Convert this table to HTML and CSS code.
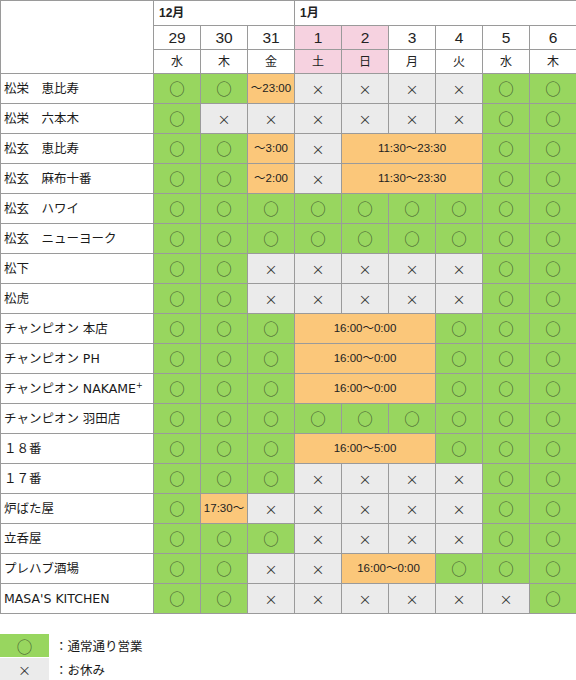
FILE: index.html
```html
<!DOCTYPE html>
<html lang="ja">
<head>
<meta charset="utf-8">
<title>年末年始営業日</title>
<link rel="stylesheet" href="styles.css">
</head>
<body>
<table class="sched">
  <colgroup>
    <col class="c-name">
    <col class="c-day"><col class="c-day"><col class="c-day"><col class="c-day"><col class="c-day"><col class="c-day"><col class="c-day"><col class="c-day"><col class="c-day">
  </colgroup>
  <thead>
    <tr class="h-month">
      <th rowspan="3" class="corner"></th>
      <th colspan="3" class="month">12月</th>
      <th colspan="6" class="month">1月</th>
    </tr>
    <tr class="h-date">
      <th>29</th><th>30</th><th>31</th><th class="hol">1</th><th class="hol">2</th><th>3</th><th>4</th><th>5</th><th>6</th>
    </tr>
    <tr class="h-dow">
      <th>水</th><th>木</th><th>金</th><th class="hol">土</th><th class="hol">日</th><th>月</th><th>火</th><th>水</th><th>木</th>
    </tr>
  </thead>
  <tbody>
    <tr><th class="name">松栄　恵比寿</th><td class="o">○</td><td class="o">○</td><td class="t">～23:00</td><td class="x">×</td><td class="x">×</td><td class="x">×</td><td class="x">×</td><td class="o">○</td><td class="o">○</td></tr>
    <tr><th class="name">松栄　六本木</th><td class="o">○</td><td class="x">×</td><td class="x">×</td><td class="x">×</td><td class="x">×</td><td class="x">×</td><td class="x">×</td><td class="o">○</td><td class="o">○</td></tr>
    <tr><th class="name">松玄　恵比寿</th><td class="o">○</td><td class="o">○</td><td class="t">～3:00</td><td class="x">×</td><td class="t" colspan="3">11:30～23:30</td><td class="o">○</td><td class="o">○</td></tr>
    <tr><th class="name">松玄　麻布十番</th><td class="o">○</td><td class="o">○</td><td class="t">～2:00</td><td class="x">×</td><td class="t" colspan="3">11:30～23:30</td><td class="o">○</td><td class="o">○</td></tr>
    <tr><th class="name">松玄　ハワイ</th><td class="o">○</td><td class="o">○</td><td class="o">○</td><td class="o">○</td><td class="o">○</td><td class="o">○</td><td class="o">○</td><td class="o">○</td><td class="o">○</td></tr>
    <tr><th class="name">松玄　ニューヨーク</th><td class="o">○</td><td class="o">○</td><td class="o">○</td><td class="o">○</td><td class="o">○</td><td class="o">○</td><td class="o">○</td><td class="o">○</td><td class="o">○</td></tr>
    <tr><th class="name">松下</th><td class="o">○</td><td class="o">○</td><td class="x">×</td><td class="x">×</td><td class="x">×</td><td class="x">×</td><td class="x">×</td><td class="o">○</td><td class="o">○</td></tr>
    <tr><th class="name">松虎</th><td class="o">○</td><td class="o">○</td><td class="x">×</td><td class="x">×</td><td class="x">×</td><td class="x">×</td><td class="x">×</td><td class="o">○</td><td class="o">○</td></tr>
    <tr><th class="name">チャンピオン 本店</th><td class="o">○</td><td class="o">○</td><td class="o">○</td><td class="t" colspan="3">16:00～0:00</td><td class="o">○</td><td class="o">○</td><td class="o">○</td></tr>
    <tr><th class="name">チャンピオン PH</th><td class="o">○</td><td class="o">○</td><td class="o">○</td><td class="t" colspan="3">16:00～0:00</td><td class="o">○</td><td class="o">○</td><td class="o">○</td></tr>
    <tr><th class="name">チャンピオン NAKAME<sup>+</sup></th><td class="o">○</td><td class="o">○</td><td class="o">○</td><td class="t" colspan="3">16:00～0:00</td><td class="o">○</td><td class="o">○</td><td class="o">○</td></tr>
    <tr><th class="name">チャンピオン 羽田店</th><td class="o">○</td><td class="o">○</td><td class="o">○</td><td class="o">○</td><td class="o">○</td><td class="o">○</td><td class="o">○</td><td class="o">○</td><td class="o">○</td></tr>
    <tr><th class="name">１８番</th><td class="o">○</td><td class="o">○</td><td class="o">○</td><td class="t" colspan="3">16:00～5:00</td><td class="o">○</td><td class="o">○</td><td class="o">○</td></tr>
    <tr><th class="name">１７番</th><td class="o">○</td><td class="o">○</td><td class="o">○</td><td class="x">×</td><td class="x">×</td><td class="x">×</td><td class="x">×</td><td class="o">○</td><td class="o">○</td></tr>
    <tr><th class="name">炉ばた屋</th><td class="o">○</td><td class="t">17:30～</td><td class="x">×</td><td class="x">×</td><td class="x">×</td><td class="x">×</td><td class="x">×</td><td class="o">○</td><td class="o">○</td></tr>
    <tr><th class="name">立呑屋</th><td class="o">○</td><td class="o">○</td><td class="o">○</td><td class="x">×</td><td class="x">×</td><td class="x">×</td><td class="x">×</td><td class="o">○</td><td class="o">○</td></tr>
    <tr><th class="name">プレハブ酒場</th><td class="o">○</td><td class="o">○</td><td class="x">×</td><td class="x">×</td><td class="t" colspan="2">16:00～0:00</td><td class="o">○</td><td class="o">○</td><td class="o">○</td></tr>
    <tr><th class="name">MASA'S KITCHEN</th><td class="o">○</td><td class="o">○</td><td class="x">×</td><td class="x">×</td><td class="x">×</td><td class="x">×</td><td class="x">×</td><td class="x">×</td><td class="o">○</td></tr>
  </tbody>
</table>

<div class="legend">
  <div class="legend-row"><span class="swatch o">○</span><span class="legend-text">：通常通り営業</span></div>
  <div class="legend-row"><span class="swatch x">×</span><span class="legend-text">：お休み</span></div>
</div>
</body>
</html>
```

FILE: styles.css
```css
html, body {
  margin: 0;
  padding: 0;
  background: #fff;
}

body {
  font-family: "Liberation Sans", "Noto Sans CJK JP", sans-serif;
  color: #222;
  font-size: 12px;
}

.sched {
  border-collapse: collapse;
  table-layout: fixed;
  width: 576px;
}

.c-name { width: 153px; }
.c-day { width: 47px; }

.sched th,
.sched td {
  border: 1px solid #9a9a9a;
  padding: 0;
  text-align: center;
  vertical-align: middle;
  font-weight: normal;
  line-height: 1;
  white-space: nowrap;
  overflow: hidden;
}

.h-month th { height: 24px; }
.h-date th { height: 22px; font-size: 15.5px; padding-top: 1px; }
.h-dow th { height: 23px; font-size: 12px; }

.sched .month {
  text-align: left;
  padding-left: 5px;
  font-size: 12px;
  font-weight: bold;
}

.sched .hol { background: #f6d2e0; }

.sched tbody th,
.sched tbody td { height: 29px; }

.sched tbody .name {
  height: 27px;
  text-align: left;
  padding-left: 3px;
  padding-top: 2px;
  font-family: "DejaVu Sans", "Noto Sans CJK JP", sans-serif;
  font-size: 12.5px;
  color: #1a1a1a;
  background: #fff;
}

.name sup {
  font-size: 8px;
  vertical-align: 5px;
  line-height: 0;
}

.sched .o,
.swatch.o {
  background: #98d65f;
  color: #44592f;
  font-family: "Noto Sans CJK JP", sans-serif;
  font-size: 15.5px;
}

.sched .x,
.swatch.x {
  background: #ebebeb;
  color: #333;
  font-family: "Noto Sans CJK JP", sans-serif;
  font-size: 13px;
}

.sched .t {
  background: #fbc77a;
  font-size: 11.5px;
  color: #222;
}

.legend {
  margin-top: 20px;
  display: flex;
  flex-direction: column;
  gap: 1px;
}

.legend-row {
  display: flex;
  align-items: center;
  gap: 6px;
}

.swatch {
  display: flex;
  align-items: center;
  justify-content: center;
  width: 49px;
  height: 23px;
}

.legend-text {
  font-family: "Noto Sans CJK JP", sans-serif;
  font-size: 12.5px;
  color: #1a1a1a;
}
```
